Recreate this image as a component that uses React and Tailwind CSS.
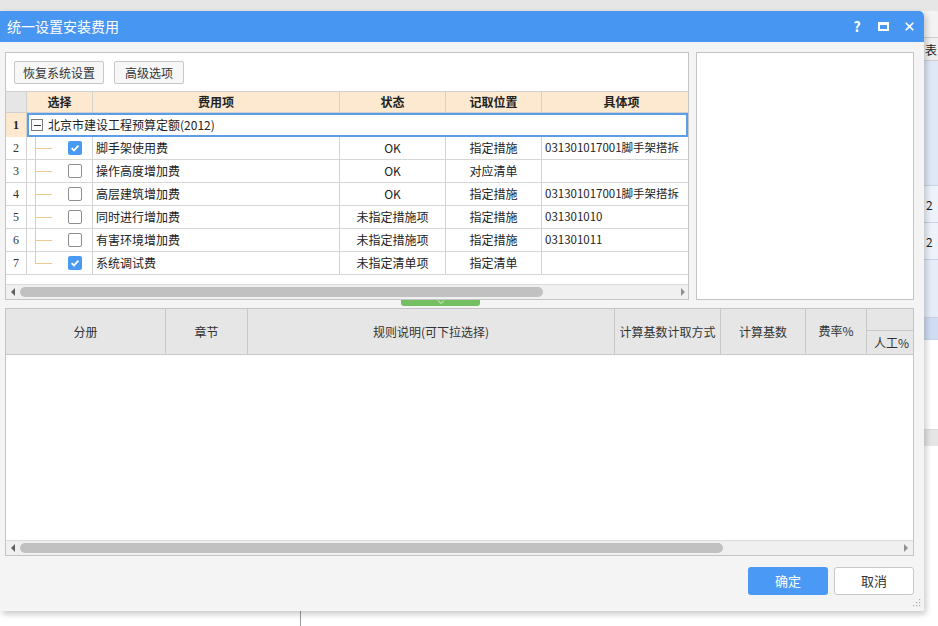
import React from "react";
import { X } from "lucide-react";

const rows = [
  { n: 2, checked: true, name: "脚手架使用费", status: "OK", pos: "指定措施", item: "031301017001脚手架搭拆" },
  { n: 3, checked: false, name: "操作高度增加费", status: "OK", pos: "对应清单", item: "" },
  { n: 4, checked: false, name: "高层建筑增加费", status: "OK", pos: "指定措施", item: "031301017001脚手架搭拆" },
  { n: 5, checked: false, name: "同时进行增加费", status: "未指定措施项", pos: "指定措施", item: "031301010" },
  { n: 6, checked: false, name: "有害环境增加费", status: "未指定措施项", pos: "指定措施", item: "031301011" },
  { n: 7, checked: true, name: "系统调试费", status: "未指定清单项", pos: "指定清单", item: "" },
];

const Checkbox = ({ checked }) =>
  checked ? (
    <span className="w-[14px] h-[14px] rounded-[2px] bg-[#4a9af3] flex items-center justify-center">
      <svg width="10" height="10" viewBox="0 0 10 10">
        <path d="M1.6 5.2 L4 7.4 L8.4 2.6" stroke="white" strokeWidth="1.8" fill="none" />
      </svg>
    </span>
  ) : (
    <span className="block w-[14px] h-[14px] rounded-[2px] border border-[#8e8e8e] bg-white" />
  );

// 横向滚动条
const HScroll = ({ thumb, pr }) => (
  <div className={`h-[15px] shrink-0 bg-[#f0f0f0] border-t border-[#dcdcdc] flex items-center pl-[5px] ${pr}`}>
    <span className="w-0 h-0 border-y-[4px] border-y-transparent border-r-[4px] border-r-[#606060]" />
    <div className={`ml-[5px] h-[10px] rounded-full bg-[#c1c1c1] ${thumb}`} />
    <div className="flex-1" />
    <span className="w-0 h-0 border-y-[4px] border-y-transparent border-l-[4px] border-l-[#909090]" />
  </div>
);

const cell = "border-r border-[#d2d2d2] h-full flex items-center shrink-0";

export default function App() {
  return (
    <div className="relative w-[938px] h-[626px] overflow-hidden bg-white font-['Noto_Sans_CJK_SC',sans-serif] text-[12px] text-[#222]">
      {/* 背景程序 */}
      <div className="flex flex-col h-full">
        <div className="h-[11px] bg-[#e6e6e6]" />
        <div className="flex flex-1">
          <div className="flex-1 flex flex-col">
            <div className="flex-1" />
            <div className="h-[15px] ml-[300px] border-l border-[#9a9a9a]" />
          </div>
          <div className="w-[14px] flex flex-col text-[12px]">
            <div className="h-[27px] bg-[#f3f3f3] border-b border-[#cfcfcf]" />
            <div className="h-[23px] bg-[#efefef] border-b border-[#cfcfcf] pl-[1px] leading-[23px] text-[#222]">表</div>
            <div className="h-[125px] bg-[#dfe8f7] border-b border-[#c9d3e3]" />
            <div className="h-[37px] bg-[#eef3fb] border-b border-[#c9d3e3] pl-[2px] leading-[37px]">2</div>
            <div className="h-[37px] bg-[#eef3fb] border-b border-[#c9d3e3] pl-[2px] leading-[37px]">2</div>
            <div className="h-[58px] bg-[#e6edf8] border-b border-[#c9d3e3]" />
            <div className="h-[22px] bg-[#cfdcf3] border-b border-[#c9d3e3]" />
            <div className="h-[90px] bg-white border-b border-[#dcdcdc]" />
            <div className="h-[16px] bg-[#e6e6e6]" />
            <div className="flex-1 bg-white" />
          </div>
        </div>
      </div>

      {/* 对话框 */}
      <div className="absolute left-0 top-[11px] w-[924px] h-[600px] flex flex-col bg-[#f4f4f4] rounded-tr-[5px] shadow-[2px_3px_6px_rgba(0,0,0,0.22)]">
        <div className="h-[31px] shrink-0 bg-[#4797f2] rounded-tr-[5px] flex items-center pl-[7px] pr-[8px] text-white">
          <span className="text-[14px]">统一设置安装费用</span>
          <div className="flex-1" />
          <span className="text-[14px] font-bold w-[12px] text-center">?</span>
          <span className="ml-[15px] w-[11px] h-[9px] border-2 border-white border-t-[3px]" />
          <X size={13} strokeWidth={3.2} className="ml-[14px]" />
        </div>

        <div className="flex-1 flex flex-col pl-[5px] pr-[10px] pt-[10px]">
          <div className="h-[248px] flex gap-[7px] shrink-0">
            {/* 左侧表格 */}
            <div className="w-[684px] bg-white border border-[#c4c4c4] flex flex-col overflow-hidden">
              <div className="h-[38px] shrink-0 flex items-start pt-[8px] pl-[8px] gap-[10px] text-[12px] text-[#333]">
                <button className="h-[23px] w-[90px] border border-[#c8c8c8] rounded-[2px] bg-[#f7f7f7]">恢复系统设置</button>
                <button className="h-[23px] w-[70px] border border-[#c8c8c8] rounded-[2px] bg-[#f7f7f7]">高级选项</button>
              </div>

              <div className="h-[22px] shrink-0 flex border-y border-[#cfcfcf] font-bold">
                <div className={`${cell} w-[21px] bg-[#e6e6e6]`} />
                <div className={`${cell} w-[66px] bg-[#fde9cf] justify-center`}>选择</div>
                <div className={`${cell} w-[247px] bg-[#fde9cf] justify-center`}>费用项</div>
                <div className={`${cell} w-[106px] bg-[#fde9cf] justify-center`}>状态</div>
                <div className={`${cell} w-[96px] bg-[#fde9cf] justify-center`}>记取位置</div>
                <div className={`${cell} w-[160px] bg-[#fde9cf] justify-center`}>具体项</div>
              </div>

              <div className="h-[24px] shrink-0 flex">
                <div className="w-[21px] shrink-0 bg-[#fde9cf] border-r border-[#d2d2d2] flex items-center justify-center font-bold font-['Liberation_Serif',serif]">1</div>
                <div className="flex-1 border-2 border-[#5d9ce6] flex items-center pl-[2px]">
                  <span className="w-[12px] h-[12px] border border-[#7a7a7a] flex items-center justify-center">
                    <span className="w-[7px] h-px bg-[#333]" />
                  </span>
                  <span className="ml-[5px]">北京市建设工程预算定额(2012)</span>
                </div>
              </div>

              {rows.map((r, i) => (
                <div key={r.n} className="h-[23px] shrink-0 flex border-b border-[#d6d6d6]">
                  <div className={`${cell} w-[21px] justify-center font-['Liberation_Serif',serif] text-[#333]`}>{r.n}</div>
                  <div className={`${cell} w-[66px]`}>
                    <svg width="26" height="22" className="shrink-0" shapeRendering="crispEdges">
                      <rect x="8" y="0" width="1" height={i === rows.length - 1 ? 12 : 22} fill="#f0c98f" />
                      <rect x="8" y="11" width="17" height="1" fill="#f0c98f" />
                    </svg>
                    <span className="ml-[15px] flex">
                      <Checkbox checked={r.checked} />
                    </span>
                  </div>
                  <div className={`${cell} w-[247px] pl-[3px]`}>{r.name}</div>
                  <div className={`${cell} w-[106px] justify-center`}>{r.status}</div>
                  <div className={`${cell} w-[96px] justify-center`}>{r.pos}</div>
                  <div className={`${cell} w-[160px] pl-[3px] whitespace-nowrap overflow-hidden text-[11.5px]`}>{r.item}</div>
                </div>
              ))}

              <div className="flex-1" />
              <HScroll thumb="w-[523px]" pr="pr-[3px]" />
            </div>

            {/* 右侧面板 */}
            <div className="flex-1 bg-white border border-[#c4c4c4]" />
          </div>

          {/* 分隔条 */}
          <div className="h-[8px] shrink-0 flex">
            <div className="ml-[396px] w-[79px] h-[6px] bg-[#73bf62] rounded-b-[3px] flex justify-center">
              <svg width="8" height="5" viewBox="0 0 8 5">
                <path d="M1 0.5 L4 3.5 L7 0.5" stroke="#e8f5e4" strokeWidth="1" fill="none" />
              </svg>
            </div>
          </div>

          {/* 下方表格 */}
          <div className="h-[248px] shrink-0 bg-white border border-[#c4c4c4] flex flex-col overflow-hidden">
            <div className="h-[46px] shrink-0 flex bg-[#e6e6e6] border-b border-[#c8c8c8] text-[#333]">
              <div className="w-[160px] border-r border-[#c8c8c8] flex items-center justify-center">分册</div>
              <div className="w-[82px] border-r border-[#c8c8c8] flex items-center justify-center">章节</div>
              <div className="w-[367px] border-r border-[#c8c8c8] flex items-center justify-center">规则说明(可下拉选择)</div>
              <div className="w-[106px] border-r border-[#c8c8c8] flex items-center justify-center">计算基数计取方式</div>
              <div className="w-[85px] border-r border-[#c8c8c8] flex items-center justify-center">计算基数</div>
              <div className="w-[61px] border-r border-[#c8c8c8] flex items-center justify-center pb-[2px]">费率%</div>
              <div className="flex-1 flex flex-col">
                <div className="h-[22px] border-b border-[#c8c8c8]" />
                <div className="flex-1 flex items-center pl-[7px]">人工%</div>
              </div>
            </div>
            <div className="flex-1" />
            <HScroll thumb="w-[703px]" pr="pr-[5px]" />
          </div>

          {/* 按钮 */}
          <div className="flex justify-end gap-[6px] pt-[11px] text-[13px]">
            <button className="w-[80px] h-[28px] rounded-[3px] bg-[#4a9af5] text-white">确定</button>
            <button className="w-[80px] h-[28px] rounded-[3px] bg-white border border-[#c8c8c8] text-[#333]">取消</button>
          </div>
        </div>

        {/* 缩放手柄 */}
        <svg width="8" height="8" className="absolute right-[3px] bottom-[4px]">
          <rect x="6" y="0" width="1.2" height="1.2" fill="#aaa" />
          <rect x="3" y="3" width="1.2" height="1.2" fill="#aaa" />
          <rect x="6" y="3" width="1.2" height="1.2" fill="#aaa" />
          <rect x="0" y="6" width="1.2" height="1.2" fill="#aaa" />
          <rect x="3" y="6" width="1.2" height="1.2" fill="#aaa" />
          <rect x="6" y="6" width="1.2" height="1.2" fill="#aaa" />
        </svg>
      </div>
    </div>
  );
}
